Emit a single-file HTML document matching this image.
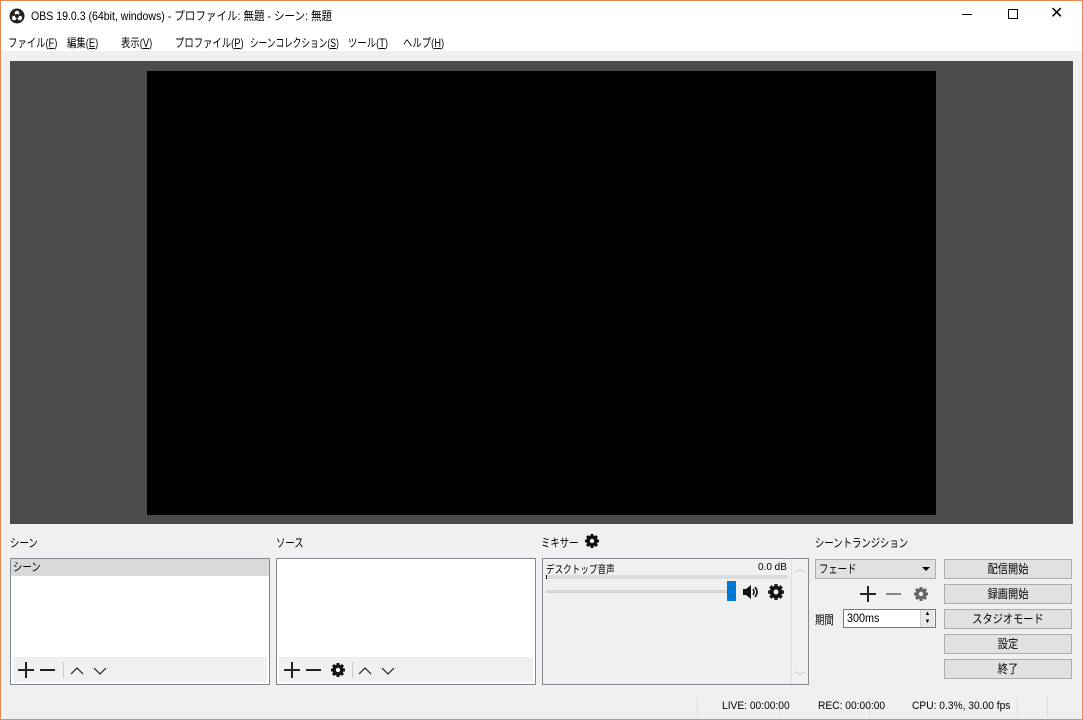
<!DOCTYPE html>
<html><head><meta charset="utf-8"><style>
*{margin:0;padding:0;box-sizing:border-box}
body{width:1083px;height:720px;overflow:hidden;background:#f0f0f0;font-family:"Liberation Sans","Noto Sans CJK JP",sans-serif;font-size:12px;color:#000;position:relative}
.a{position:absolute}
.s{transform:scaleX(0.78);transform-origin:left top;white-space:nowrap}
.win{position:absolute;left:0;top:0;width:1083px;height:720px;border:1px solid #e8874f;pointer-events:none}
.btn{position:absolute;left:944px;width:128px;height:20px;background:#e1e1e1;border:1px solid #adadad;text-align:center;line-height:18px;font-size:12px}
.btn span{display:inline-block;transform:scaleX(0.85)}
.list{position:absolute;top:558px;height:127px;background:#fff;border:1px solid #828790}
.tb{position:absolute;left:2px;right:2px;bottom:2px;height:25px;background:#f0f0f0}
.m{position:absolute;top:34px}
</style></head><body>
<div class="a" style="left:0;top:0;width:1083px;height:51px;background:#fff"></div>
<svg class="a" style="left:9px;top:8px" width="16" height="16" viewBox="0 0 16 16"><circle cx="8" cy="8" r="7.5" fill="#222"/><circle cx="8" cy="5" r="2.3" fill="#fff"/><circle cx="5.2" cy="10" r="2.3" fill="#fff"/><circle cx="10.8" cy="10" r="2.3" fill="#fff"/><circle cx="8" cy="8" r="2" fill="#222"/></svg>
<div class="a s" style="left:31px;top:7px;transform:scaleX(0.88)">OBS 19.0.3 (64bit, windows) - プロファイル: 無題 - シーン: 無題</div>
<div class="a" style="left:962px;top:14px;width:10px;height:1px;background:#000"></div>
<div class="a" style="left:1008px;top:9px;width:10px;height:10px;border:1px solid #000"></div>
<div class="a" style="left:1050px;top:3px;font-size:16px">✕</div>
<div class="m s" style="left:8px">ファイル(<u>F</u>)</div>
<div class="m s" style="left:67px">編集(<u>E</u>)</div>
<div class="m s" style="left:121px">表示(<u>V</u>)</div>
<div class="m s" style="left:175px">プロファイル(<u>P</u>)</div>
<div class="m s" style="left:250px;transform:scaleX(0.72)">シーンコレクション(<u>S</u>)</div>
<div class="m s" style="left:348px">ツール(<u>T</u>)</div>
<div class="m s" style="left:403px">ヘルプ(<u>H</u>)</div>
<div class="a" style="left:10px;top:61px;width:1063px;height:463px;background:#4c4c4c"></div>
<div class="a" style="left:147px;top:71px;width:789px;height:444px;background:#000"></div>

<div class="a s" style="left:10px;top:534px">シーン</div>
<div class="a s" style="left:276px;top:534px">ソース</div>
<div class="a s" style="left:541px;top:534px">ミキサー</div>
<svg class="a" style="left:584px;top:533px" width="16" height="16" viewBox="0 0 16 16"><circle cx="8" cy="8" r="5.5" fill="#111"/><path d="M8 1v14M1 8h14M3 3l10 10M13 3L3 13" stroke="#111" stroke-width="3"/><circle cx="8" cy="8" r="2.2" fill="#f0f0f0"/></svg>
<div class="a s" style="left:815px;top:534px">シーントランジション</div>

<div class="list" style="left:10px;width:260px">
<div style="height:17px;background:#d9d9d9;padding-left:2px;line-height:17px"><span class="s" style="display:inline-block">シーン</span></div>
<div class="tb"><svg width="120" height="25"><g stroke="#222" stroke-width="2" fill="none"><path d="M5 13h16M13 5v16M27 13h15"/><path stroke="#ccc" stroke-width="1" d="M50.5 5v16"/><path stroke-width="1.2" d="M58 17l6-6 6 6M81 11l6 6 6-6"/></g></svg></div>
</div>
<div class="list" style="left:276px;width:260px">
<div class="tb"><svg width="130" height="25"><g stroke="#222" stroke-width="2" fill="none"><path d="M5 13h16M13 5v16M27 13h15"/><path stroke="#ccc" stroke-width="1" d="M73.5 5v16"/><path stroke-width="1.2" d="M80 17l6-6 6 6M103 11l6 6 6-6"/></g><g transform="translate(51,5)"><circle cx="8" cy="8" r="5.5" fill="#111"/><path d="M8 1v14M1 8h14M3 3l10 10M13 3L3 13" stroke="#111" stroke-width="3"/><circle cx="8" cy="8" r="2.2" fill="#fff"/></g></svg></div>
</div>

<div class="a" style="left:542px;top:558px;width:267px;height:127px;background:#f0f0f0;border:1px solid #828790"></div>
<div class="a" style="left:791px;top:559px;width:17px;height:125px;background:#f0f0f0;border-left:1px solid #e0e0e0"></div>
<div class="a" style="left:795px;top:560px;color:#bbb;font-size:10px">︿</div>
<div class="a" style="left:795px;top:668px;color:#bbb;font-size:10px">﹀</div>
<div class="a s" style="left:546px;top:561px;font-size:11px">デスクトップ音声</div>
<div class="a" style="left:758px;top:562px;font-size:10px">0.0 dB</div>
<div class="a" style="left:546px;top:575px;width:242px;height:4px;background:#dcdcdc"></div>
<div class="a" style="left:546px;top:575px;width:1px;height:4px;background:#000"></div>
<div class="a" style="left:546px;top:590px;width:184px;height:3px;background:#dcdcdc;border:1px solid #d0d0d0"></div>
<div class="a" style="left:727px;top:581px;width:9px;height:20px;background:#0078d7"></div>
<svg class="a" style="left:742px;top:584px" width="18" height="16" viewBox="0 0 18 16"><path d="M1 5h3l5-4v14l-5-4H1z" fill="#111"/><path d="M11 5q2 3 0 6M13 3q4 5 0 10" stroke="#111" stroke-width="1.6" fill="none"/></svg>
<svg class="a" style="left:767px;top:583px" width="18" height="18" viewBox="0 0 16 16"><circle cx="8" cy="8" r="5.5" fill="#111"/><path d="M8 1v14M1 8h14M3 3l10 10M13 3L3 13" stroke="#111" stroke-width="3"/><circle cx="8" cy="8" r="2.2" fill="#f0f0f0"/></svg>

<div class="a" style="left:815px;top:559px;width:121px;height:20px;background:#e1e1e1;border:1px solid #adadad;padding-left:3px;line-height:18px"><span class="s" style="display:inline-block">フェード</span></div>
<div class="a" style="left:922px;top:567px;border-left:4px solid transparent;border-right:4px solid transparent;border-top:4px solid #000"></div>
<svg class="a" style="left:858px;top:584px;" width="80" height="20"><g stroke="#222" stroke-width="2"><path d="M2 10h16M10 2v16"/><path stroke="#888" d="M28 10h15"/></g><g transform="translate(55,2)"><circle cx="8" cy="8" r="5.5" fill="#666"/><path d="M8 1v14M1 8h14M3 3l10 10M13 3L3 13" stroke="#666" stroke-width="3"/><circle cx="8" cy="8" r="2.2" fill="#f0f0f0"/></g></svg>
<div class="a s" style="left:815px;top:611px">期間</div>
<div class="a" style="left:843px;top:609px;width:93px;height:19px;background:#fff;border:1px solid #7a7a7a;padding-left:3px;line-height:17px"><span class="s" style="display:inline-block;transform:scaleX(0.9)">300ms</span></div>
<div class="a" style="left:920px;top:610px;width:14px;height:17px;background:#e8e8e8;border-left:1px solid #ccc;font-size:6px;text-align:center;line-height:8px">▲<br>▼</div>

<div class="btn" style="top:559px"><span>配信開始</span></div>
<div class="btn" style="top:584px"><span>録画開始</span></div>
<div class="btn" style="top:609px"><span>スタジオモード</span></div>
<div class="btn" style="top:634px"><span>設定</span></div>
<div class="btn" style="top:659px"><span>終了</span></div>

<div class="a" style="left:697px;top:697px;width:1px;height:20px;background:#ddd"></div>
<div class="a" style="left:779px;top:697px;width:1px;height:20px;background:#ddd"></div>
<div class="a" style="left:869px;top:697px;width:1px;height:20px;background:#ddd"></div>
<div class="a" style="left:1017px;top:697px;width:1px;height:20px;background:#ddd"></div>
<div class="a" style="left:1047px;top:697px;width:1px;height:20px;background:#ddd"></div>
<div class="a s" style="left:722px;top:700px;font-size:11px;transform:scaleX(0.93)">LIVE: 00:00:00</div>
<div class="a s" style="left:818px;top:700px;font-size:11px;transform:scaleX(0.93)">REC: 00:00:00</div>
<div class="a s" style="left:912px;top:700px;font-size:11px;transform:scaleX(0.93)">CPU: 0.3%, 30.00 fps</div>
<div class="win"></div>
</body></html>
